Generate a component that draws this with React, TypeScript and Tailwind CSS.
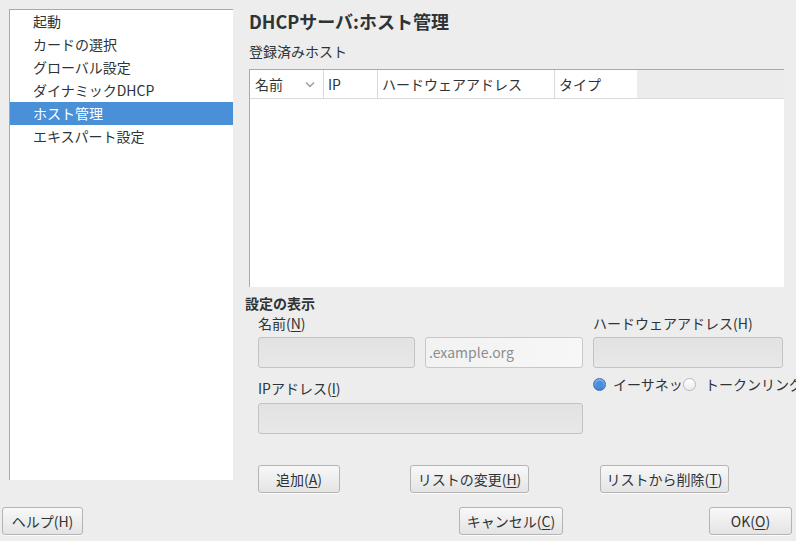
import React from "react";

const font = { fontFamily: '"Noto Sans CJK JP", "Noto Sans", sans-serif' };

function Btn({ children, className }: { children: React.ReactNode; className: string }) {
  return (
    <div
      className={
        "h-[28px] shrink-0 flex items-center justify-center rounded-[3px] border border-[#b4b4b4] bg-gradient-to-b from-[#f8f8f8] to-[#e4e4e4] text-[14px] text-[#2e3436] shadow-[0_1px_0_rgba(255,255,255,0.8)] " +
        className
      }
    >
      {children}
    </div>
  );
}

function U({ children }: { children: React.ReactNode }) {
  return <span className="underline underline-offset-2">{children}</span>;
}

function Radio({ checked }: { checked: boolean }) {
  return checked ? (
    <div className="w-[13px] h-[13px] shrink-0 rounded-full border border-[#3b6fb0] bg-gradient-to-b from-[#7fb3ec] to-[#3d80d2] flex items-center justify-center">
      <div className="w-[7px] h-[7px] rounded-full bg-[#4a8ee0]" />
    </div>
  ) : (
    <div className="w-[13px] h-[13px] shrink-0 rounded-full border border-[#b8b8b8] bg-gradient-to-b from-[#ffffff] to-[#ececec]" />
  );
}

export default function App() {
  const items = ["起動", "カードの選択", "グローバル設定", "ダイナミックDHCP", "ホスト管理", "エキスパート設定"];
  return (
    <div className="w-[796px] h-[541px] bg-[#ededed] flex flex-col overflow-hidden text-[#2e3436]" style={font}>
      <div className="flex h-[480px] shrink-0 pt-[9px]">
        {/* left panel */}
        <div className="ml-[9px] w-[224px] h-[471px] shrink-0 bg-white border-l border-t border-[#a9a9a9] flex flex-col">
          {items.map((t) => (
            <div
              key={t}
              className={
                "h-[23px] shrink-0 leading-[23px] pl-[23px] text-[14px] whitespace-nowrap " +
                (t === "ホスト管理" ? "bg-[#4a90d9] text-white" : "text-[#2e3436]")
              }
            >
              {t}
            </div>
          ))}
        </div>

        {/* right content */}
        <div className="ml-[12px] flex-1 flex flex-col">
          <div className="ml-[4px] h-[24px] shrink-0 leading-[24px] text-[18px] font-bold whitespace-nowrap">DHCPサーバ:ホスト管理</div>
          <div className="ml-[4px] mt-[8px] h-[20px] shrink-0 leading-[20px] text-[14px]">登録済みホスト</div>

          {/* table */}
          <div className="ml-[4px] mt-[8px] w-[535px] h-[218px] shrink-0 bg-white border-l border-t border-[#a9a9a9] flex flex-col">
            <div className="h-[29px] shrink-0 flex border-b border-[#dadada] text-[14px]">
              <div className="w-[74px] border-r border-[#dadada] pl-[5px] pr-[8px] flex items-center justify-between">
                <span>名前</span>
                <svg width="10" height="7" viewBox="0 0 10 7">
                  <path d="M1 1.5 L5 5.5 L9 1.5" fill="none" stroke="#9a9a9a" strokeWidth="1.4" />
                </svg>
              </div>
              <div className="w-[54px] border-r border-[#dadada] pl-[4px] flex items-center">IP</div>
              <div className="w-[177px] border-r border-[#dadada] pl-[4px] flex items-center">ハードウェアアドレス</div>
              <div className="w-[82px] pl-[4px] flex items-center">タイプ</div>
              <div className="flex-1 bg-[#ececec]" />
            </div>
            <div className="flex-1 bg-white" />
          </div>

          <div className="mt-[6px] h-[20px] shrink-0 leading-[20px] text-[14px] font-bold">設定の表示</div>

          <div className="ml-[13px] flex shrink-0">
            <div className="w-[325px] flex flex-col">
              <div className="h-[20px] leading-[20px] text-[14px]">
                名前(<U>N</U>)
              </div>
              <div className="mt-[4px] flex gap-[10px]">
                <div className="w-[157px] h-[31px] rounded-[3px] border border-[#c3c3c3] bg-gradient-to-b from-[#e2e2e2] to-[#e8e8e8]" />
                <div className="w-[158px] h-[31px] rounded-[3px] border border-[#c8c8c8] bg-gradient-to-r from-[#f2f2f2] to-[#f7f7f7] pl-[3px] flex items-center text-[14px] text-[#8b8e8f]">
                  .example.org
                </div>
              </div>
              <div className="mt-[10px] h-[20px] leading-[20px] text-[14px]">
                IPアドレス(<U>I</U>)
              </div>
              <div className="mt-[5px] w-[325px] h-[31px] rounded-[3px] border border-[#c3c3c3] bg-gradient-to-b from-[#e2e2e2] to-[#e8e8e8]" />
            </div>
            <div className="ml-[10px] w-[203px] flex flex-col">
              <div className="h-[20px] leading-[20px] text-[14px] whitespace-nowrap">ハードウェアアドレス(H)</div>
              <div className="mt-[4px] w-[190px] h-[31px] rounded-[3px] border border-[#c3c3c3] bg-gradient-to-b from-[#e2e2e2] to-[#e8e8e8]" />
              <div className="mt-[6px] h-[20px] flex text-[14px]">
                <div className="w-[90px] overflow-hidden flex items-center whitespace-nowrap">
                  <Radio checked />
                  <span className="ml-[7px]">イーサネット</span>
                </div>
                <div className="flex-1 overflow-hidden flex items-center whitespace-nowrap">
                  <Radio checked={false} />
                  <span className="ml-[9px]">トークンリング</span>
                </div>
              </div>
            </div>
          </div>

          <div className="mt-[31px] flex shrink-0">
            <Btn className="ml-[13px] w-[82px]">
              追加(<U>A</U>)
            </Btn>
            <Btn className="ml-[70px] w-[119px]">
              リストの変更(<U>H</U>)
            </Btn>
            <Btn className="ml-[71px] w-[129px]">
              リストから削除(<U>T</U>)
            </Btn>
          </div>
        </div>
      </div>

      <div className="mt-[27px] flex shrink-0">
        <Btn className="ml-[2px] w-[81px]">ヘルプ(H)</Btn>
        <Btn className="ml-[376px] w-[104px]">
          キャンセル(<U>C</U>)
        </Btn>
        <Btn className="ml-[146px] w-[83px]">
          OK(<U>O</U>)
        </Btn>
      </div>
    </div>
  );
}
